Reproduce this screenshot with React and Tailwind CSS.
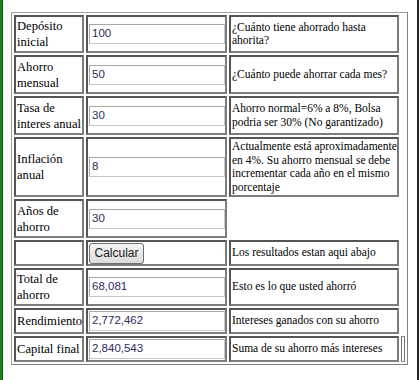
import React from "react";

const serif = { fontFamily: '"Liberation Serif", "Times New Roman", serif' };
const sans = { fontFamily: '"Liberation Sans", Arial, sans-serif' };

const cell = "border-2 border-t-[#555] border-l-[#555] border-r-[#7d7d7d] border-b-[#7d7d7d] p-0 align-middle";

function Label({ children }) {
  return (
    <td className={`${cell} w-[70px] pl-[1px] text-[12.6px] leading-[16px] text-black whitespace-nowrap`} style={serif}>
      {children}
    </td>
  );
}

function Field({ value }) {
  return (
    <td className={`${cell} w-[141px] pl-[1px]`}>
      <div
        className="w-[136px] h-[20px] border border-t-[#a8a8a8] border-l-[#a8a8a8] border-r-[#c8c8c8] border-b-[#c8c8c8] bg-white flex items-center pl-[2px] text-[11.5px] text-[#2e2a5e]"
        style={sans}
      >
        {value}
      </div>
    </td>
  );
}

function Note({ children }) {
  return (
    <td className={`${cell} w-[170px] pl-[1px] text-[11.5px] leading-[13.5px] text-black whitespace-nowrap`} style={serif}>
      {children}
    </td>
  );
}

const emptyCell = "border-0 p-0";

export default function App() {
  return (
    <div className="w-[420px] h-[380px] bg-white flex overflow-hidden">
      <div className="w-[3px] h-full bg-[#1d7f1d] border-r border-[#0f560f]" />
      <div className="flex-1 pl-[8px] pt-[12px]">
        <table
          className="table-fixed w-[397px] border-separate border-spacing-[2px] border border-t-[#a0a0a0] border-l-[#a0a0a0] border-r-[#808080] border-b-[#808080]"
          style={serif}
        >
          <tbody>
            <tr className="h-[38px]">
              <Label>Depósito<br />inicial</Label>
              <Field value="100" />
              <Note>¿Cuánto tiene ahorrado hasta<br />ahorita?</Note>
              <td className={`${emptyCell} w-[4px]`} />
            </tr>
            <tr className="h-[39px]">
              <Label>Ahorro<br />mensual</Label>
              <Field value="50" />
              <Note>¿Cuánto puede ahorrar cada mes?</Note>
              <td className={emptyCell} />
            </tr>
            <tr className="h-[39px]">
              <Label>Tasa de<br />interes anual</Label>
              <Field value="30" />
              <Note>Ahorro normal=6% a 8%, Bolsa<br />podria ser 30% (No garantizado)</Note>
              <td className={emptyCell} />
            </tr>
            <tr className="h-[60px]">
              <Label>Inflación<br />anual</Label>
              <Field value="8" />
              <Note>
                Actualmente está aproximadamente<br />
                en 4%. Su ahorro mensual se debe<br />
                incrementar cada año en el mismo<br />
                porcentaje
              </Note>
              <td className={emptyCell} />
            </tr>
            <tr className="h-[39px]">
              <Label>Años de<br />ahorro</Label>
              <Field value="30" />
              <td className={`${emptyCell} w-[170px]`} />
              <td className={emptyCell} />
            </tr>
            <tr className="h-[26px]">
              <Label>{"\u00a0"}</Label>
              <td className={`${cell} pl-[1px]`}>
                <button
                  className="w-[55px] h-[21px] border border-[#707070] rounded-[3px] bg-gradient-to-b from-[#f4f4f4] to-[#dcdcdc] text-[12px] text-[#1a1a1a] flex items-center justify-center"
                  style={sans}
                >
                  Calcular
                </button>
              </td>
              <Note>Los resultados estan aqui abajo</Note>
              <td className={emptyCell} />
            </tr>
            <tr className="h-[38px]">
              <Label>Total de<br />ahorro</Label>
              <Field value="68,081" />
              <Note>Esto es lo que usted ahorró</Note>
              <td className={emptyCell} />
            </tr>
            <tr className="h-[26px]">
              <Label>Rendimiento</Label>
              <Field value="2,772,462" />
              <Note>Intereses ganados con su ahorro</Note>
              <td className={emptyCell} />
            </tr>
            <tr className="h-[26px]">
              <Label>Capital final</Label>
              <Field value="2,840,543" />
              <Note>Suma de su ahorro más intereses</Note>
              <td className="border border-l-[#707070] border-r-[#707070] border-t-[#909090] border-b-[#909090] p-0 w-[4px]" />
            </tr>
          </tbody>
        </table>
      </div>
      <div className="w-[2px] h-full bg-[#222]" />
      <div className="w-[1px] h-full bg-white" />
    </div>
  );
}
